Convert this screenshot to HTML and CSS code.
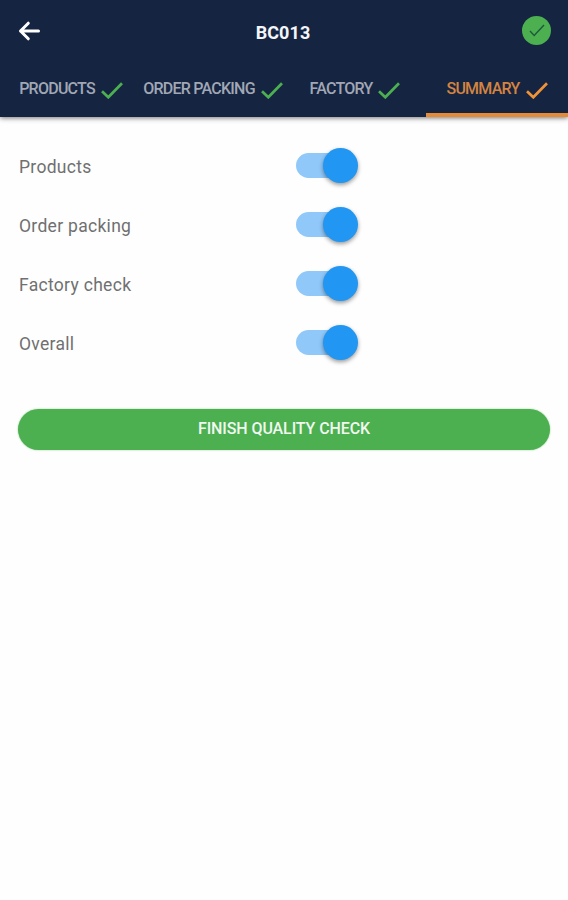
FILE: index.html
```html
<!DOCTYPE html>
<html lang="en">
<head>
    <meta charset="UTF-8">
    <meta name="viewport" content="width=device-width, initial-scale=1.0">
    <title>BC013</title>
    <link rel="stylesheet" href="styles.css">
</head>
<body>
    <header class="header">
        <div class="top-bar">
            <button class="icon-btn" aria-label="Back">
                <svg class="back-icon" width="22" height="20" viewBox="0 0 22 20">
                    <path d="M10.3 2.2 L2.5 10 L10.3 17.8 M2.5 10 H20.5"/>
                </svg>
            </button>
            <h1>BC013</h1>
            <button class="icon-btn done" aria-label="Done">
                <svg class="done-icon" width="16" height="13" viewBox="0 0 16 13">
                    <path d="M1 7 L5.2 11.5 L15 1"/>
                </svg>
            </button>
        </div>

        <nav class="tabs">
            <a class="tab"><span class="tab-text">PRODUCTS</span><svg class="check" viewBox="0 0 22 17"><path d="M1 9.3 L7.3 15.3 L21 1.3"/></svg></a>
            <a class="tab"><span class="tab-text">ORDER PACKING</span><svg class="check" viewBox="0 0 22 17"><path d="M1 9.3 L7.3 15.3 L21 1.3"/></svg></a>
            <a class="tab"><span class="tab-text">FACTORY</span><svg class="check" viewBox="0 0 22 17"><path d="M1 9.3 L7.3 15.3 L21 1.3"/></svg></a>
            <a class="tab active"><span class="tab-text">SUMMARY</span><svg class="check" viewBox="0 0 22 17"><path d="M1 9.3 L7.3 15.3 L21 1.3"/></svg></a>
        </nav>
    </header>

    <main class="content">
        <div class="row">
            <span class="label">Products</span>
            <div class="switch"><div class="thumb"></div></div>
        </div>
        <div class="row">
            <span class="label">Order packing</span>
            <div class="switch"><div class="thumb"></div></div>
        </div>
        <div class="row">
            <span class="label">Factory check</span>
            <div class="switch"><div class="thumb"></div></div>
        </div>
        <div class="row">
            <span class="label">Overall</span>
            <div class="switch"><div class="thumb"></div></div>
        </div>

        <button class="finish-btn">FINISH QUALITY CHECK</button>
    </main>
</body>
</html>
```

FILE: styles.css
```css
* {
    box-sizing: border-box;
}

body {
    margin: 0;
    font-family: Roboto, sans-serif;
    background-color: #fefefe;
}

button {
    padding: 0;
    border: none;
    background: none;
    font-family: inherit;
}

.header {
    height: 117px;
    background-color: #142441;
    box-shadow: 0 1px 5px rgba(0, 0, 0, 0.55);
}

.top-bar {
    display: flex;
    justify-content: space-between;
    align-items: center;
    height: 61px;
    padding: 0 17px 0 18px;
}

.icon-btn {
    display: flex;
    justify-content: center;
    align-items: center;
    width: 29px;
    height: 29px;
}

.back-icon {
    margin-right: 7px;
}

.back-icon path {
    fill: none;
    stroke: #fff;
    stroke-width: 3;
    stroke-linecap: round;
    stroke-linejoin: round;
}

h1 {
    margin: 3px 3px 0 0;
    font-size: 18px;
    font-weight: 700;
    letter-spacing: 0.1px;
    color: #f4f5f8;
}

.done {
    border-radius: 50%;
    background-color: #4caf50;
}

.done-icon path {
    fill: none;
    stroke: #1d5a3c;
    stroke-width: 1.4;
}

.tabs {
    display: flex;
    height: 56px;
}

.tab {
    flex: 1;
    display: flex;
    justify-content: center;
    align-items: center;
    gap: 6px;
    padding-top: 5px;
    border-bottom: 4px solid transparent;
    font-size: 16px;
    font-weight: 500;
    color: #a1a7b4;
    white-space: nowrap;
}

.tab-text {
    margin-bottom: 3px;
    letter-spacing: -0.75px;
}

.check {
    width: 22px;
    height: 17px;
    margin-top: 2px;
}

.check path {
    fill: none;
    stroke: #4caf50;
    stroke-width: 2.7;
}

.tab.active {
    border-bottom-color: #e58a38;
    color: #d48440;
}

.tab.active .check path {
    stroke: #f09338;
}

.content {
    padding: 19px 18px;
}

.row {
    display: flex;
    align-items: center;
    height: 59px;
}

.label {
    width: 278px;
    padding: 2px 0 0 1px;
    font-size: 17.5px;
    letter-spacing: 0.3px;
    color: #707070;
}

.switch {
    display: flex;
    justify-content: flex-end;
    align-items: center;
    width: 62px;
    height: 25px;
    border-radius: 13px;
    background: linear-gradient(to right, #90c8f9 48px, transparent 48px);
}

.thumb {
    width: 35px;
    height: 35px;
    border-radius: 50%;
    background-color: #2196f3;
    box-shadow: 0 2px 4px rgba(0, 0, 0, 0.4);
}

.finish-btn {
    display: block;
    width: 100%;
    height: 41px;
    margin-top: 37px;
    padding-bottom: 2px;
    border-radius: 21px;
    background-color: #4caf50;
    box-shadow: 0 0 2px rgba(76, 175, 80, 0.6);
    font-size: 16px;
    font-weight: 500;
    letter-spacing: -0.1px;
    color: #f0f8f0;
}
```
